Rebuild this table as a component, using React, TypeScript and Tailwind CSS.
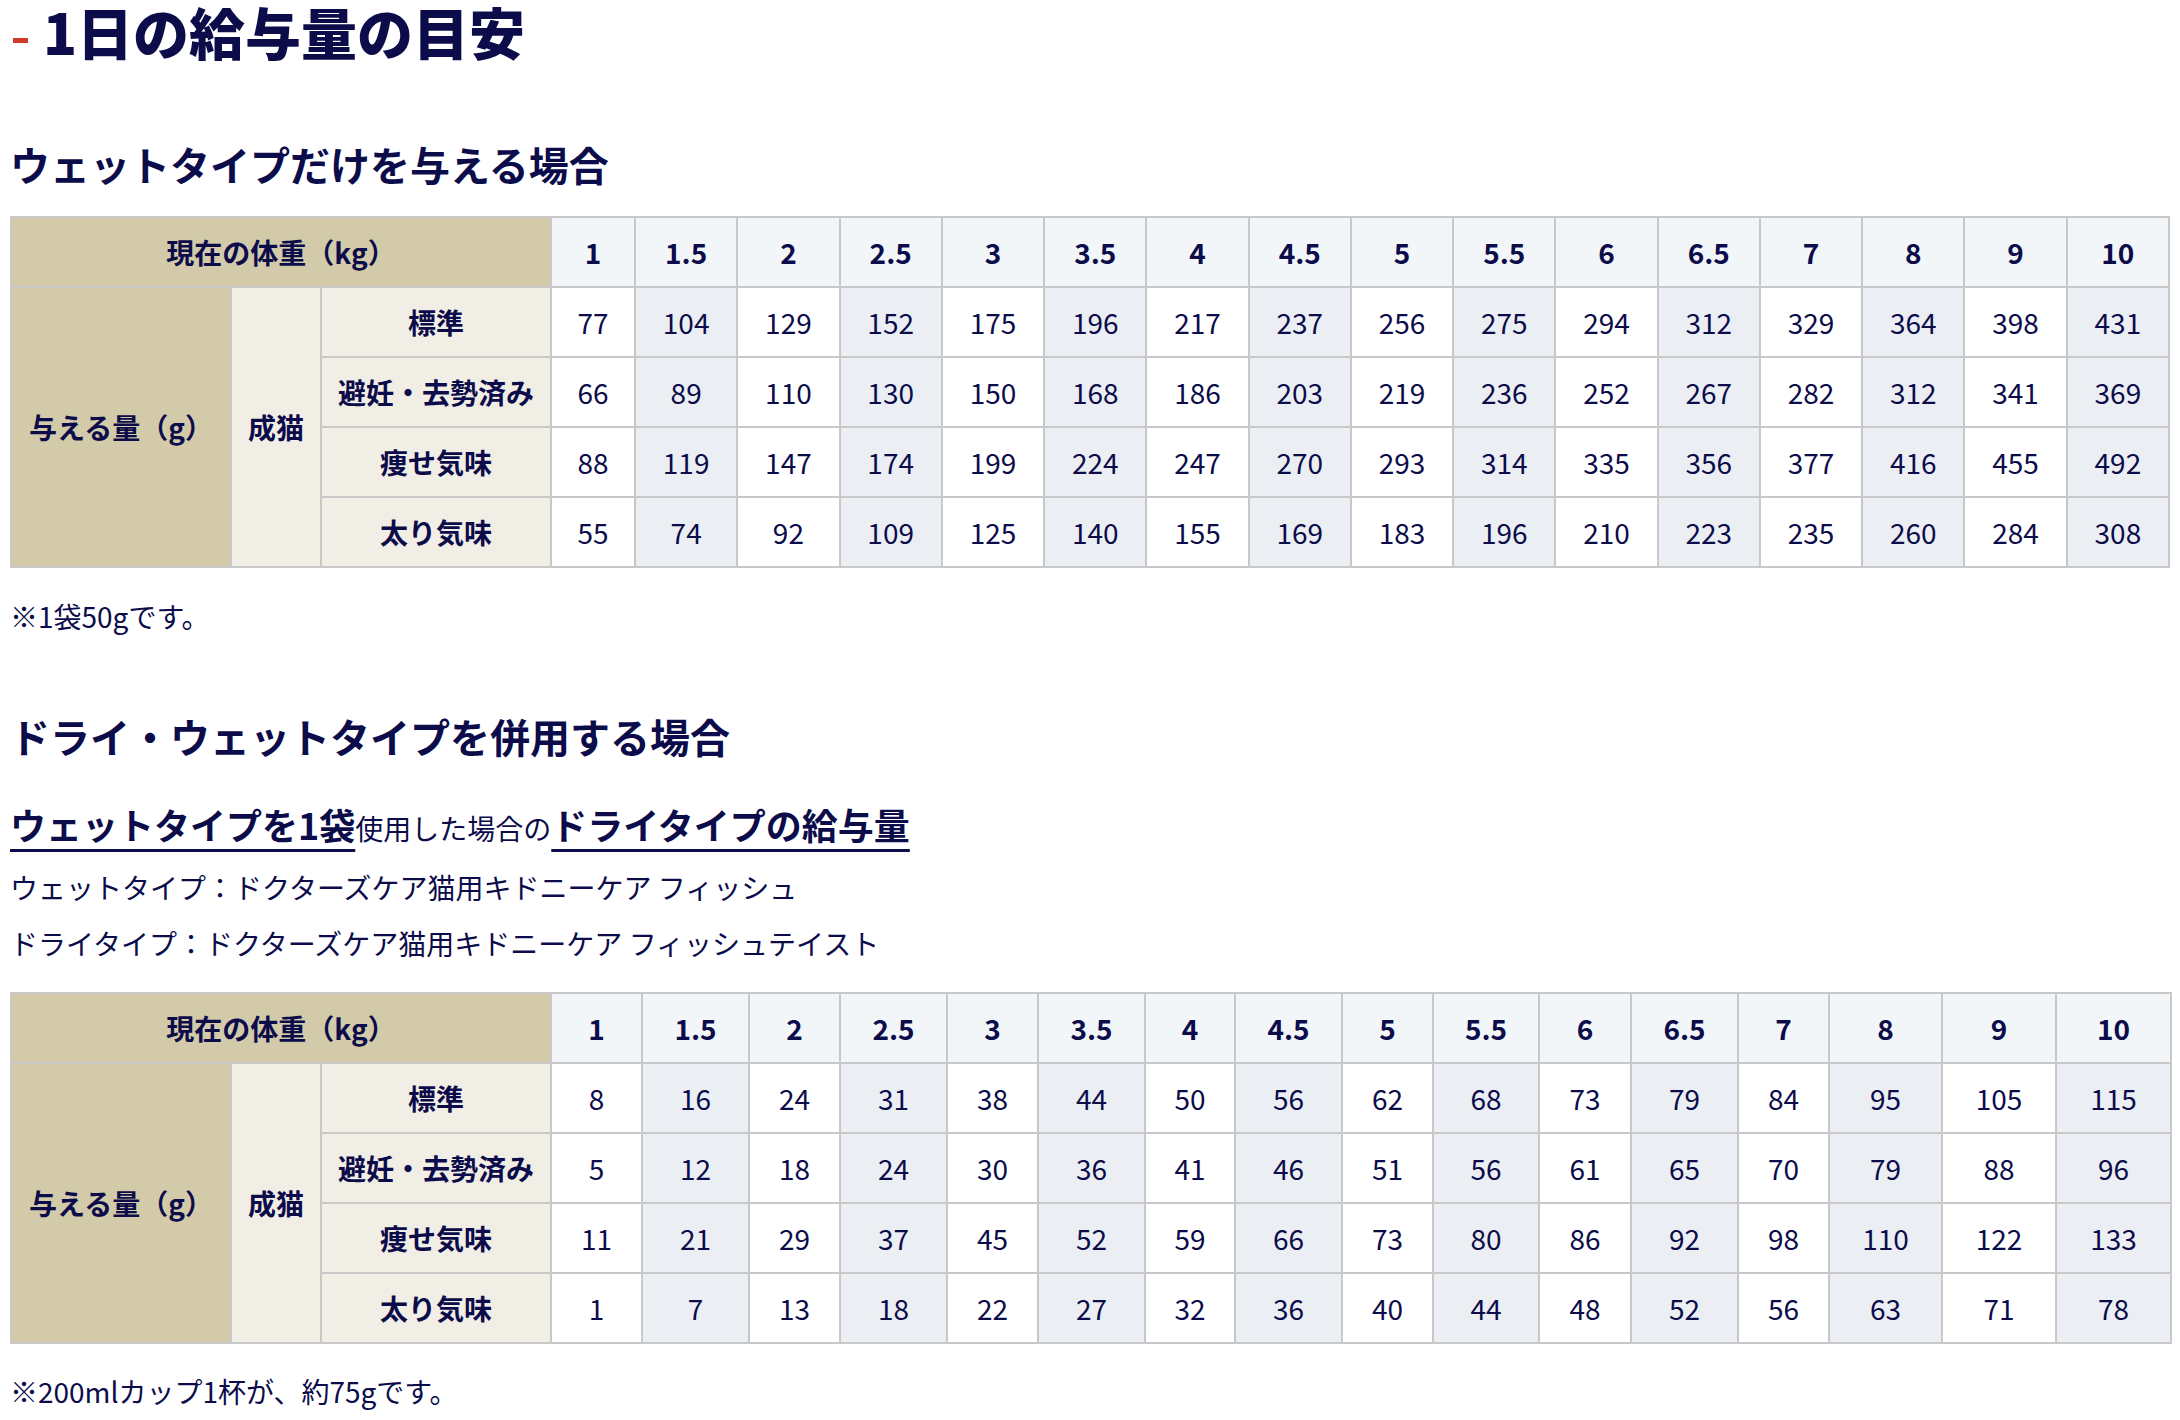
import React from "react";

const weights = ["1", "1.5", "2", "2.5", "3", "3.5", "4", "4.5", "5", "5.5", "6", "6.5", "7", "8", "9", "10"];

const wetOnly = [
  ["標準", [77, 104, 129, 152, 175, 196, 217, 237, 256, 275, 294, 312, 329, 364, 398, 431]],
  ["避妊・去勢済み", [66, 89, 110, 130, 150, 168, 186, 203, 219, 236, 252, 267, 282, 312, 341, 369]],
  ["痩せ気味", [88, 119, 147, 174, 199, 224, 247, 270, 293, 314, 335, 356, 377, 416, 455, 492]],
  ["太り気味", [55, 74, 92, 109, 125, 140, 155, 169, 183, 196, 210, 223, 235, 260, 284, 308]],
] as const;

const mixed = [
  ["標準", [8, 16, 24, 31, 38, 44, 50, 56, 62, 68, 73, 79, 84, 95, 105, 115]],
  ["避妊・去勢済み", [5, 12, 18, 24, 30, 36, 41, 46, 51, 56, 61, 65, 70, 79, 88, 96]],
  ["痩せ気味", [11, 21, 29, 37, 45, 52, 59, 66, 73, 80, 86, 92, 98, 110, 122, 133]],
  ["太り気味", [1, 7, 13, 18, 22, 27, 32, 36, 40, 44, 48, 52, 56, 63, 71, 78]],
] as const;

// column widths measured off the reference, table 1 lets the 15 remaining cols share the rest
const cols1 = ["w-[84px]"];
const cols2 = [
  "w-[91px]", "w-[107px]", "w-[91px]", "w-[107px]", "w-[91px]", "w-[107px]", "w-[90px]", "w-[107px]",
  "w-[91px]", "w-[106px]", "w-[92px]", "w-[107px]", "w-[91px]", "w-[113px]", "w-[114px]", "w-[115px]",
];

const cell = "border-2 border-[#c8c8c8] h-[70px] p-0 text-center align-middle";

function FeedTable({ rows, cols }: { rows: typeof wetOnly | typeof mixed; cols: string[] }) {
  return (
    <table className="w-full table-fixed border-collapse text-[28px] leading-[42px]">
      <colgroup>
        <col className="w-[220px]" />
        <col className="w-[90px]" />
        <col className="w-[230px]" />
        {weights.map((w, i) => (
          <col key={w} className={cols[i] ?? ""} />
        ))}
      </colgroup>
      <thead>
        <tr>
          <th colSpan={3} className={`${cell} bg-[#d3caa9] font-bold`}>
            現在の体重（kg）
          </th>
          {weights.map((w) => (
            <th key={w} className={`${cell} bg-[#f3f6f9] font-bold`}>
              {w}
            </th>
          ))}
        </tr>
      </thead>
      <tbody>
        {rows.map(([label, vals], r) => (
          <tr key={label}>
            {r === 0 && (
              <>
                <th rowSpan={4} className={`${cell} bg-[#d3caa9] font-bold`}>
                  与える量（g）
                </th>
                <th rowSpan={4} className={`${cell} bg-[#f1eee6] font-bold`}>
                  成猫
                </th>
              </>
            )}
            <th className={`${cell} bg-[#f1eee6] font-bold`}>{label}</th>
            {vals.map((v, i) => (
              <td key={i} className={`${cell} font-normal ${i % 2 === 1 ? "bg-[#ebeff4]" : "bg-white"}`}>
                {v}
              </td>
            ))}
          </tr>
        ))}
      </tbody>
    </table>
  );
}

export default function App() {
  return (
    <div className="min-h-screen bg-white px-[10px] pb-10 text-[#0c0c4b] font-['Noto_Sans_CJK_JP','Noto_Sans',sans-serif]">
      <h1 className="flex items-start h-[62px]">
        <span className="mt-[38px] ml-[3px] mr-[15px] block w-[15px] h-[5px] bg-[#d13b2c]" />
        <span className="text-[56px] leading-[62px] font-black">1日の給与量の目安</span>
      </h1>

      <h2 className="mt-[72px] text-[40px] leading-[60px] font-bold">ウェットタイプだけを与える場合</h2>
      <div className="mt-[22px]">
        <FeedTable rows={wetOnly} cols={cols1} />
      </div>
      <p className="mt-[27px] text-[28px] leading-[42px]">※1袋50gです。</p>

      <h2 className="mt-[69px] text-[40px] leading-[60px] font-bold">ドライ・ウェットタイプを併用する場合</h2>
      <p className="mt-[31px] text-[36px] leading-[54px]">
        <span className="font-bold underline decoration-[3px] underline-offset-[9px]">ウェットタイプを1袋</span>
        <span className="text-[28px]">使用した場合の</span>
        <span className="font-bold underline decoration-[3px] underline-offset-[9px]">ドライタイプの給与量</span>
      </p>
      <div className="mt-[4px] text-[28px] leading-[56px]">
        <p>ウェットタイプ：ドクターズケア猫用キドニーケア フィッシュ</p>
        <p>ドライタイプ：ドクターズケア猫用キドニーケア フィッシュテイスト</p>
      </div>
      <div className="mt-[21px]">
        <FeedTable rows={mixed} cols={cols2} />
      </div>
      <p className="mt-[26px] text-[28px] leading-[42px]">※200mlカップ1杯が、約75gです。</p>
    </div>
  );
}
